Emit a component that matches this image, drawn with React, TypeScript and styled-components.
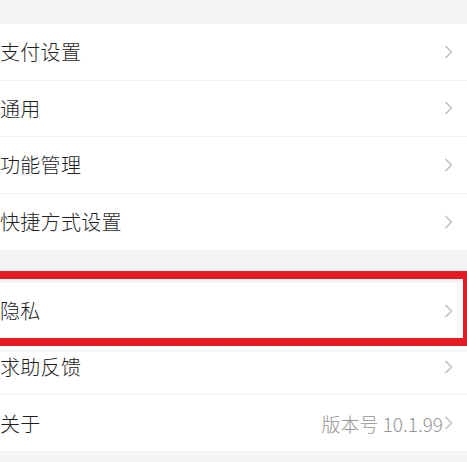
import React from "react";
import styled, { createGlobalStyle } from "styled-components";

const Global = createGlobalStyle`
  html, body { margin: 0; padding: 0; background: #f4f3f5; }
  body { font-family: "Noto Sans CJK SC", "Noto Sans", sans-serif; overflow: hidden; }
`;

const Page = styled.div`
  position: relative;
  width: 467px;
  height: 462px;
  background: #f4f3f5;
  padding-top: 24px;
  box-sizing: border-box;
  overflow: hidden;
`;

const Section = styled.div<{ $gap?: number }>`
  background: #ffffff;
  margin-bottom: ${(p) => p.$gap ?? 0}px;
`;

const Row = styled.div<{ $h: number; $last?: boolean }>`
  height: ${(p) => p.$h}px;
  display: flex;
  align-items: center;
  justify-content: space-between;
  padding: 0 14px 0 0;
  box-sizing: border-box;
  border-bottom: ${(p) => (p.$last ? "none" : "1px solid #f1f0f2")};
`;

const Label = styled.span`
  font-size: 20px;
  font-weight: 300;
  color: #1f1f1f;
  letter-spacing: 0.3px;
`;

const Right = styled.div`
  display: flex;
  align-items: center;
`;

const Value = styled.span`
  font-size: 19px;
  font-weight: 300;
  color: #959595;
  margin-right: 1px;
`;

const Highlight = styled.div`
  position: absolute;
  left: -10px;
  right: 0;
  top: 271px;
  height: 75px;
  border-top: 8px solid #e41b23;
  border-bottom: 8px solid #e41b23;
  border-right: 4px solid #e41b23;
  box-sizing: border-box;
  pointer-events: none;
`;

const Chevron = () => (
  <svg width="9" height="14" viewBox="0 0 9 14">
    <path d="M1.5 1 L7.5 7 L1.5 13" fill="none" stroke="#bdbdbd" strokeWidth="1.4" />
  </svg>
);

type Item = { label: string; value?: string };

const s1: Item[] = [
  { label: "支付设置" },
  { label: "通用" },
  { label: "功能管理" },
  { label: "快捷方式设置" },
];
const s2: Item[] = [
  { label: "隐私" },
  { label: "求助反馈" },
  { label: "关于", value: "版本号 10.1.99" },
];

export default function App() {
  return (
    <>
      <Global />
      <Page>
        <Section $gap={33}>
          {s1.map((it, i) => (
            <Row key={it.label} $h={56.5} $last={i === s1.length - 1}>
              <Label>{it.label}</Label>
              <Right>
                <Chevron />
              </Right>
            </Row>
          ))}
        </Section>
        <Section>
          {s2.map((it, i) => (
            <Row key={it.label} $h={56} $last={i === s2.length - 1}>
              <Label>{it.label}</Label>
              <Right>
                {it.value && <Value>{it.value}</Value>}
                <Chevron />
              </Right>
            </Row>
          ))}
        </Section>
        <Highlight />
      </Page>
    </>
  );
}
